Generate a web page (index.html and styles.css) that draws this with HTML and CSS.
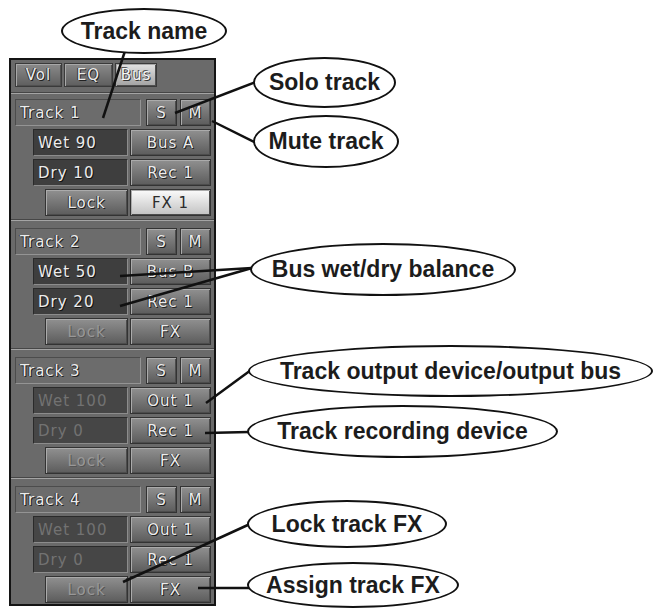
FILE: index.html
```html
<!DOCTYPE html>
<html lang="en">
<head>
  <meta charset="UTF-8" />
  <title>Bus panel</title>
  <link rel="stylesheet" href="styles.css">
</head>
<body>
  <div class="figure">
    <div class="mixer">
      <div class="tabs">
        <span class="tab vol">Vol</span>
        <span class="tab eq">EQ</span>
        <span class="tab bus active">Bus</span>
      </div>
      <div class="rule first"></div>

      <div class="track">
        <div class="row head"><div class="name">Track 1</div><div class="btn">S</div><div class="btn">M</div></div>
        <div class="row mid"><div class="field">Wet 90</div><div class="btn">Bus A</div></div>
        <div class="row mid"><div class="field">Dry 10</div><div class="btn">Rec 1</div></div>
        <div class="row foot"><div class="btn">Lock</div><div class="btn on">FX 1</div></div>
      </div>
      <div class="rule"></div>

      <div class="track">
        <div class="row head"><div class="name">Track 2</div><div class="btn">S</div><div class="btn">M</div></div>
        <div class="row mid"><div class="field">Wet 50</div><div class="btn">Bus B</div></div>
        <div class="row mid"><div class="field">Dry 20</div><div class="btn">Rec 1</div></div>
        <div class="row foot"><div class="btn off">Lock</div><div class="btn">FX</div></div>
      </div>
      <div class="rule"></div>

      <div class="track">
        <div class="row head"><div class="name">Track 3</div><div class="btn">S</div><div class="btn">M</div></div>
        <div class="row mid"><div class="field off">Wet 100</div><div class="btn">Out 1</div></div>
        <div class="row mid"><div class="field off">Dry 0</div><div class="btn">Rec 1</div></div>
        <div class="row foot"><div class="btn off">Lock</div><div class="btn">FX</div></div>
      </div>
      <div class="rule"></div>

      <div class="track">
        <div class="row head"><div class="name">Track 4</div><div class="btn">S</div><div class="btn">M</div></div>
        <div class="row mid"><div class="field off">Wet 100</div><div class="btn">Out 1</div></div>
        <div class="row mid"><div class="field off">Dry 0</div><div class="btn">Rec 1</div></div>
        <div class="row foot"><div class="btn off">Lock</div><div class="btn">FX</div></div>
      </div>
    </div>

    <!-- leader lines from the labels to the controls -->
    <svg class="leaders" width="654" height="611" viewBox="0 0 654 611">
      <g stroke="#111" stroke-width="2.5" fill="none">
        <line x1="125" y1="51" x2="103" y2="118" />
        <line x1="175" y1="113" x2="256" y2="82" />
        <line x1="212" y1="121" x2="256" y2="143" />
        <line x1="120" y1="276" x2="252" y2="268" />
        <line x1="120" y1="306" x2="252" y2="268" />
        <line x1="206" y1="403" x2="251" y2="370" />
        <line x1="205" y1="433" x2="249" y2="432" />
        <line x1="123" y1="582" x2="250" y2="524" />
        <line x1="198" y1="588" x2="249" y2="588" />
      </g>
    </svg>

    <div class="callout c-name">Track name</div>
    <div class="callout c-solo">Solo track</div>
    <div class="callout c-mute">Mute track</div>
    <div class="callout c-bal">Bus wet/dry balance</div>
    <div class="callout c-out">Track output device/output bus</div>
    <div class="callout c-rec">Track recording device</div>
    <div class="callout c-lock">Lock track FX</div>
    <div class="callout c-fx">Assign track FX</div>
  </div>
</body>
</html>
```

FILE: styles.css
```css
body {
  margin: 0;
  background: #fff;
}

.figure {
  position: relative;
  width: 654px;
  height: 611px;
  overflow: hidden;
}

/* mixer panel */
.mixer {
  margin: 58px 0 0 9px;
  width: 207px;
  box-sizing: border-box;
  border: 2px solid #141414;
  background: #6a6a6a;
  padding: 3px 3px 1px 4px;
  font-family: "DejaVu Sans", Verdana, sans-serif;
  font-size: 15px;
  color: #ececec;
}

.tabs {
  display: flex;
  gap: 2px;
  height: 24px;
}

.tab {
  box-sizing: border-box;
  display: flex;
  align-items: center;
  justify-content: center;
  border: 1px solid #3a3a3a;
  box-shadow: inset 1px 1px 0 #a8a8a8, inset -1px -1px 0 #505050;
  background: linear-gradient(#8a8a8a, #5e5e5e);
  letter-spacing: 1px;
  text-shadow: 1px 1px 0 #222, -1px 0 0 #333;
}

.tab.vol { width: 47px; }
.tab.eq { width: 49px; }
.tab.bus { width: 42px; }

.tab.active {
  background: linear-gradient(#e2e2e2, #a2a2a2);
  color: #f6f6f6;
  text-shadow: 1px 1px 0 #333, -1px -1px 0 #555;
}

.rule {
  height: 0;
  border-top: 1px solid #464646;
  border-bottom: 1px solid #a4a4a4;
  margin: 3px -3px 7px -4px;
}

.rule.first {
  margin: 5px -3px 5px -4px;
}

.track {
  display: grid;
  gap: 3px;
}

.row {
  display: grid;
  height: 27px;
}

.row.head {
  grid-template-columns: 1fr 31px 31px;
  gap: 3px;
}

.row.head .name {
  margin-right: 2px;
}

.row.mid {
  grid-template-columns: 95px 1fr;
  gap: 2px;
  padding-left: 18px;
}

.row.foot {
  grid-template-columns: 83px 1fr;
  gap: 2px;
  padding-left: 30px;
}

.name,
.field,
.btn {
  box-sizing: border-box;
  display: flex;
  align-items: center;
  white-space: nowrap;
  letter-spacing: 1px;
}

.name {
  padding-left: 4px;
  border: 1px solid;
  border-color: #4c4c4c #949494 #949494 #4c4c4c;
  background: #6c6c6c;
  text-shadow: 1px 1px 0 #1e1e1e, -1px 0 0 #333;
}

.field {
  padding-left: 4px;
  border: 1px solid;
  border-color: #2a2a2a #8c8c8c #8c8c8c #2a2a2a;
  background: #3e3e3e;
  text-shadow: 1px 1px 0 #111;
}

.field.off {
  color: #727272;
  background: #464646;
  text-shadow: none;
}

.btn {
  justify-content: center;
  border: 1px solid #333;
  box-shadow: inset 1px 1px 0 #ababab, inset -1px -1px 0 #4c4c4c;
  background: linear-gradient(#909090, #5c5c5c);
  text-shadow: 1px 1px 0 #1e1e1e, -1px 0 0 #333;
}

.btn.off {
  color: #989898;
  text-shadow: 1px 1px 0 #555;
}

.btn.on {
  background: linear-gradient(#fbfbfb, #c2c2c2);
  color: #2c2c2c;
  text-shadow: none;
}

/* annotations */
.leaders {
  position: absolute;
  left: 0;
  top: 0;
}

.callout {
  position: absolute;
  box-sizing: border-box;
  display: flex;
  align-items: center;
  justify-content: center;
  border: 2.5px solid #111;
  border-radius: 50%;
  background: #fff;
  font-family: "Liberation Sans", Arial, sans-serif;
  font-weight: bold;
  font-size: 23px;
  color: #1c1c1c;
  white-space: nowrap;
}

.c-name { left: 61px;  top: 8px;   width: 166px; height: 46px; }
.c-solo { left: 253px; top: 57px;  width: 143px; height: 51px; }
.c-mute { left: 253px; top: 115px; width: 146px; height: 53px; }
.c-bal  { left: 250px; top: 243px; width: 266px; height: 53px; }
.c-out  { left: 248px; top: 345px; width: 405px; height: 52px; }
.c-rec  { left: 247px; top: 405px; width: 311px; height: 53px; }
.c-lock { left: 247px; top: 500px; width: 200px; height: 48px; }
.c-fx   { left: 247px; top: 562px; width: 212px; height: 46px; }
```
